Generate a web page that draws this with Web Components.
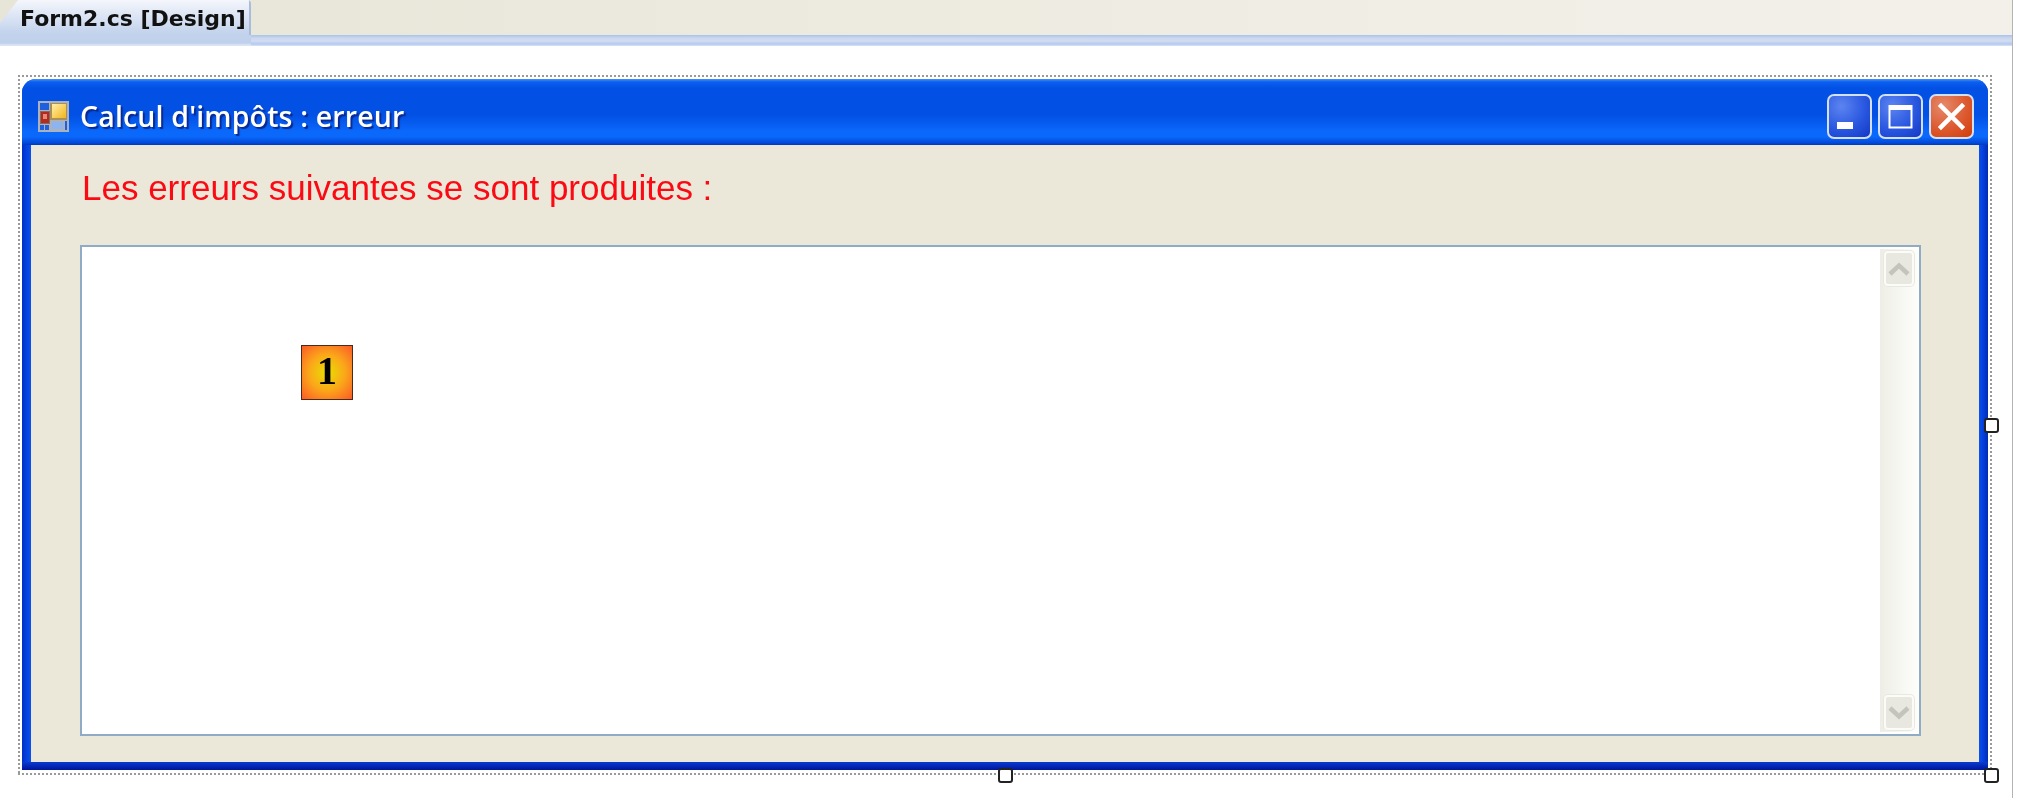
<!DOCTYPE html>
<html>
<head>
<meta charset="utf-8">
<title>Form2.cs [Design]</title>
<style>
html, body { margin: 0; padding: 0; background: #fff; }
</style>
</head>
<body>
<vs-designer tab="Form2.cs [Design]">
  <xp-form caption="Calcul d'impôts : erreur">
    <span slot="label">Les erreurs suivantes se sont produites :</span>
    <num-badge style="--left:219px;--top:98px">1</num-badge>
  </xp-form>
</vs-designer>

<script>
class VsDesigner extends HTMLElement {
    constructor() {
        super();
        this.attachShadow({mode: 'open'});
    }

    connectedCallback() {
        this.shadowRoot.innerHTML = `
            <style>
                :host {
                    display: block;
                    width: 2013px;
                    height: 798px;
                    border-right: 1px solid #b4b4b4;
                    box-sizing: border-box;
                    filter: blur(0.5px);
                }
                .strip {
                    height: 46px;
                    display: flex;
                    background:
                        linear-gradient(#a9c2e9, #c9d7ee 3px, #d4dcf0 6px, #b2c9f0 9px, #dbe5f6 11px) bottom / 100% 11px no-repeat,
                        linear-gradient(90deg, #e7e5d7, #efede3 60%, #f3f0ea);
                }
                .tab {
                    width: 251px;
                    height: 46px;
                    box-sizing: border-box;
                    padding-left: 20px;
                    background:
                        linear-gradient(#a9bcd9, #a9bcd9) right top / 2px 35px no-repeat,
                        linear-gradient(#f4f6fc, #c3d3ec 33px, #bfd0ec 43px, #dbe5f6 45px);
                    border-top-right-radius: 4px;
                    clip-path: polygon(0 23px, 18px 0, 100% 0, 100% 100%, 0 100%);
                    font: bold 22px/38px "DejaVu Sans", sans-serif;
                    color: #111;
                    white-space: nowrap;
                }
                .surface {
                    padding: 29px 0 0 18px;
                }
            </style>
            <div class="strip"><div class="tab">${this.getAttribute('tab')}</div></div>
            <div class="surface"><slot></slot></div>
        `;
    }
}

class XpForm extends HTMLElement {
    constructor() {
        super();
        this.attachShadow({mode: 'open'});
    }

    connectedCallback() {
        this.shadowRoot.innerHTML = `
            <style>
                :host {
                    display: block;
                    position: relative;
                    width: 1974px;
                    height: 700px;
                    box-sizing: border-box;
                    padding: 4px 4px 5px;
                    background:
                        repeating-linear-gradient(90deg, #9a9a9a 0 2px, #fff 2px 4px) top / 100% 2px no-repeat,
                        repeating-linear-gradient(90deg, #9a9a9a 0 2px, #fff 2px 4px) bottom / 100% 2px no-repeat,
                        repeating-linear-gradient(#9a9a9a 0 2px, #fff 2px 4px) left / 2px 100% no-repeat,
                        repeating-linear-gradient(#9a9a9a 0 2px, #fff 2px 4px) right / 2px 100% no-repeat;
                }
                .window {
                    height: 100%;
                    display: flex;
                    flex-direction: column;
                    background: linear-gradient(90deg, #0030c4, #0440dc 4px, #0a50ec 9px, #0a50ec calc(100% - 9px), #0440dc calc(100% - 5px), #002cb4);
                    border-radius: 14px 14px 0 0;
                    padding: 0 9px 8px;
                    box-sizing: border-box;
                    position: relative;
                }
                .window::after {
                    content: '';
                    position: absolute;
                    left: 0;
                    right: 0;
                    bottom: 0;
                    height: 8px;
                    background: linear-gradient(#0a3cd0, #00149a);
                }
                .title {
                    height: 66px;
                    flex: none;
                    margin: 0 -9px;
                    padding: 14px 14px 6px 16px;
                    box-sizing: border-box;
                    border-radius: 14px 14px 0 0;
                    display: flex;
                    align-items: center;
                    gap: 11px;
                    background: linear-gradient(#4a90f4 0, #0a60f0 3px, #0350e4 9px, #0350e4 36px, #0a68fa 52px, #0a68fa 58px, #0348d8 64px, #0038c0 66px);
                }
                .caption {
                    flex: 1;
                    font: 600 28.5px "Open Sans", sans-serif;
                    letter-spacing: 0.16px;
                    color: #fff;
                    text-shadow: 2px 2px 1px #0a2a90;
                    white-space: nowrap;
                }
                .buttons {
                    display: flex;
                    gap: 6px;
                }
                .client {
                    flex: 1;
                    min-height: 0;
                    background: #ebe8d9;
                    padding: 23px 58px 26px 49px;
                    display: flex;
                    flex-direction: column;
                    box-sizing: border-box;
                    position: relative;
                    z-index: 1;
                }
                .label {
                    height: 77px;
                    flex: none;
                    font: 35px "Liberation Sans", sans-serif;
                    color: #fb0a14;
                    padding-left: 2px;
                    white-space: nowrap;
                }
                .box {
                    flex: 1;
                    min-height: 0;
                    position: relative;
                    background: #fff;
                    border: 2px solid #8fabc6;
                    display: flex;
                    justify-content: flex-end;
                    padding: 2px 1px 2px 0;
                }
                .handle {
                    position: absolute;
                    width: 11px;
                    height: 11px;
                    background: #fff;
                    border: 2px solid #222;
                    border-radius: 3px;
                    z-index: 2;
                }
                .h1 { right: -7px; top: 343px; }
                .h2 { left: 980px; bottom: -8px; }
                .h3 { right: -7px; bottom: -8px; }
            </style>
            <div class="window">
                <div class="title">
                    <form-icon></form-icon>
                    <div class="caption">${this.getAttribute('caption')}</div>
                    <div class="buttons">
                        <cap-button kind="min"></cap-button>
                        <cap-button kind="max"></cap-button>
                        <cap-button kind="close"></cap-button>
                    </div>
                </div>
                <div class="client">
                    <div class="label"><slot name="label"></slot></div>
                    <div class="box">
                        <slot></slot>
                        <xp-scrollbar></xp-scrollbar>
                    </div>
                </div>
            </div>
            <div class="handle h1"></div>
            <div class="handle h2"></div>
            <div class="handle h3"></div>
        `;
    }
}

class FormIcon extends HTMLElement {
    constructor() {
        super();
        this.attachShadow({mode: 'open'});
        this.shadowRoot.innerHTML = `
            <style>
                :host { display: block; width: 31px; height: 31px; flex: none; }
                svg { display: block; }
            </style>
            <svg width="31" height="31" viewBox="0 0 31 31">
                <defs>
                    <linearGradient id="y" x1="0" y1="0" x2="1" y2="1"><stop offset="0" stop-color="#fff0a8"/><stop offset="1" stop-color="#f2b41c"/></linearGradient>
                </defs>
                <rect width="31" height="31" fill="#a9b2bd"/>
                <rect x="2" y="2" width="9" height="7" fill="#1f5fe0"/>
                <rect x="2" y="24" width="4" height="5" fill="#1f5fe0"/>
                <rect x="7" y="24" width="4" height="5" fill="#1f5fe0"/>
                <rect x="12" y="2" width="17" height="17" fill="#a8905a"/>
                <rect x="14" y="3" width="14" height="14" fill="url(#y)"/>
                <rect x="2" y="10" width="10" height="13" fill="#8a6a60"/>
                <rect x="3" y="11" width="8" height="11" fill="#b32a1e"/>
                <rect x="5" y="13" width="4" height="5" fill="#e58a78"/>
                <rect x="14" y="21" width="11" height="7" fill="#8db4f0"/>
                <rect x="27" y="20" width="2" height="9" fill="#1f5fe0"/>
            </svg>
        `;
    }
}

class CapButton extends HTMLElement {
    constructor() {
        super();
        this.attachShadow({mode: 'open'});
    }

    connectedCallback() {
        const kind = this.getAttribute('kind');
        const glyphs = {
            min: '<rect x="10" y="28" width="16" height="7" fill="#fff"/>',
            max: '<path d="M11.500 12 H33.500 V33.500 H11.500 Z" fill="none" stroke="#fff" stroke-width="2"/><rect x="11" y="11" width="23" height="5" fill="#fff"/>',
            close: '<path d="M12 12 L33 33 M33 12 L12 33" stroke="#fff" stroke-width="4.500" stroke-linecap="square" fill="none"/>'
        };
        this.shadowRoot.innerHTML = `
            <style>
                :host {
                    display: block;
                    width: 45px;
                    height: 45px;
                    box-sizing: border-box;
                    border: 2px solid #d4dff8;
                    border-radius: 7px;
                    overflow: hidden;
                    background: radial-gradient(circle at 30% 25%, #5c84f0, #2a58e0 55%, #1438c4);
                }
                :host([kind="close"]) {
                    background: radial-gradient(circle at 30% 25%, #e58a6c, #dc5a30 55%, #d23c08);
                }
                svg { display: block; margin: -2px; }
            </style>
            <svg width="45" height="45" viewBox="0 0 45 45">${glyphs[kind]}</svg>
        `;
    }
}

class XpScrollbar extends HTMLElement {
    constructor() {
        super();
        this.attachShadow({mode: 'open'});
        this.shadowRoot.innerHTML = `
            <style>
                :host {
                    display: flex;
                    flex-direction: column;
                    justify-content: space-between;
                    width: 38px;
                    box-sizing: border-box;
                    padding: 2px 4px;
                    background: linear-gradient(90deg, #eeede5, #f6f6f1 50%, #fdfdfb);
                }
                .btn {
                    height: 35px;
                    border-radius: 4px;
                    border: 2px solid #fbfbf8;
                    box-sizing: border-box;
                    background: #e9e8e0;
                    box-shadow: 0 0 0 1px #e9e8e0;
                    display: flex;
                    align-items: center;
                    justify-content: center;
                }
            </style>
            <div class="btn"><svg width="22" height="14" viewBox="0 0 22 14"><path d="M2 12 L11 3.500 L20 12" fill="none" stroke="#c4c4bc" stroke-width="4.500"/></svg></div>
            <div class="btn"><svg width="22" height="14" viewBox="0 0 22 14"><path d="M2 2 L11 10.500 L20 2" fill="none" stroke="#c4c4bc" stroke-width="4.500"/></svg></div>
        `;
    }
}

// numbered callout that sits over the text box
class NumBadge extends HTMLElement {
    constructor() {
        super();
        this.attachShadow({mode: 'open'});
        this.shadowRoot.innerHTML = `
            <style>
                :host {
                    position: absolute;
                    left: var(--left);
                    top: var(--top);
                    width: 52px;
                    height: 55px;
                    box-sizing: border-box;
                    border: 1px solid #4a2a18;
                    background: radial-gradient(circle, #e8e000 0, #fba61a 50%, #fb5a28 100%);
                    font: bold 40px/50px "Liberation Serif", serif;
                    color: #000;
                    text-align: center;
                }
            </style>
            <slot></slot>
        `;
    }
}

customElements.define('vs-designer', VsDesigner);
customElements.define('xp-form', XpForm);
customElements.define('form-icon', FormIcon);
customElements.define('cap-button', CapButton);
customElements.define('xp-scrollbar', XpScrollbar);
customElements.define('num-badge', NumBadge);
</script>
</body>
</html>
